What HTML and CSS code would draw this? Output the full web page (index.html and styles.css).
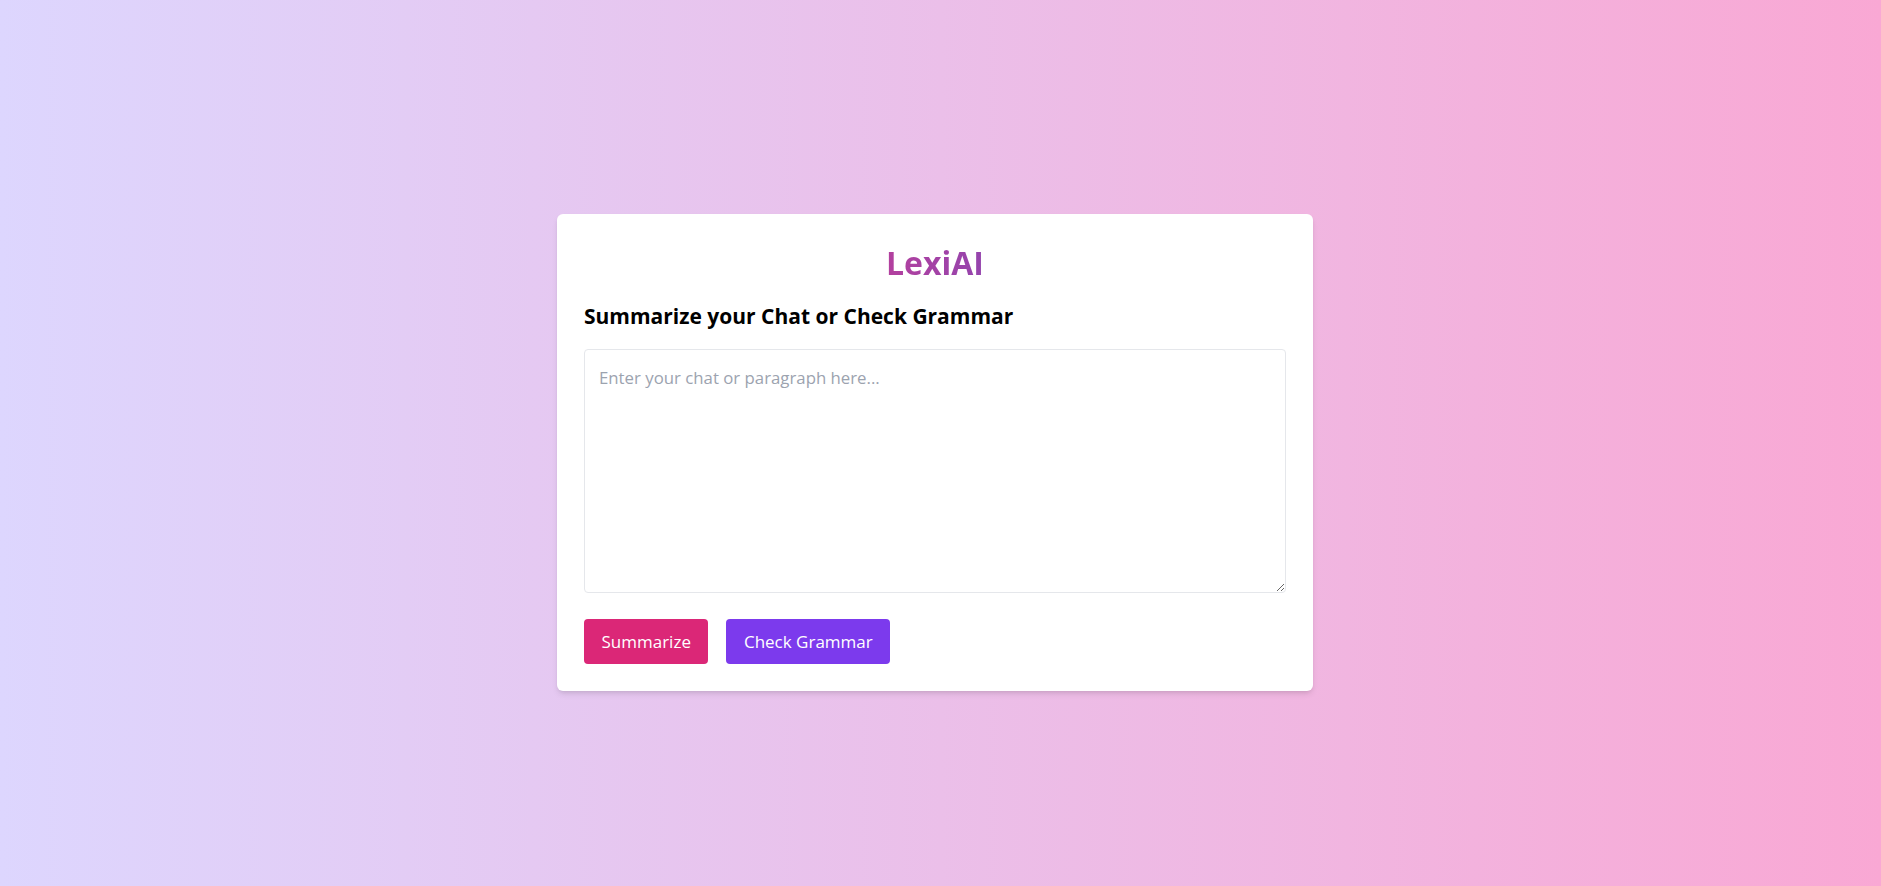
FILE: index.html
```html
<!DOCTYPE html>
<html lang="en">
<head>
<meta charset="utf-8">
<title>LexiAI</title>
<link rel="stylesheet" href="styles.css">
</head>
<body>
<main class="page">
  <section class="card">
    <h1 class="title">LexiAI</h1>
    <h2 class="subtitle">Summarize your Chat or Check Grammar</h2>
    <textarea class="input" placeholder="Enter your chat or paragraph here..."></textarea>
    <div class="actions">
      <button class="btn btn-pink">Summarize</button>
      <button class="btn btn-violet">Check Grammar</button>
    </div>
  </section>
</main>
</body>
</html>
```
FILE: styles.css
```css
* { box-sizing: border-box; }
html, body { margin: 0; padding: 0; }
body {
  font-family: "Open Sans", "Noto Sans", sans-serif;
  background: linear-gradient(to right, #ddd6fe, #f9a8d4);
  min-height: 100vh;
}
.page {
  min-height: 100vh;
  display: flex;
  align-items: center;
  justify-content: center;
  padding: 18px 11px 0 0;
}
.card {
  width: 756px;
  background: #fff;
  border-radius: 6px;
  box-shadow: 0 4px 6px -1px rgba(0,0,0,0.1), 0 2px 4px -2px rgba(0,0,0,0.1);
  padding: 29px 27px 27px;
  display: flex;
  flex-direction: column;
}
.title {
  margin: 0;
  text-align: center;
  font-size: 32px;
  line-height: 40px;
  font-weight: 700;
  background: linear-gradient(to right, #b3409e, #9444ad);
  -webkit-background-clip: text;
  background-clip: text;
  color: transparent;
  align-self: center;
}
.subtitle {
  margin: 19px 0 0;
  font-size: 21px;
  line-height: 28px;
  font-weight: 700;
  color: #000;
}
.input {
  margin-top: 19px;
  width: 100%;
  height: 244px;
  border: 1px solid #e5e7eb;
  border-radius: 4px;
  padding: 15px 14px;
  font-family: inherit;
  font-size: 16.8px;
  line-height: 25px;
  resize: vertical;
  color: #111827;
  outline: none;
  display: block;
}
.input::placeholder { color: #9ca3af; }
.actions {
  margin-top: 26px;
  display: flex;
  gap: 18px;
}
.btn {
  border: none;
  border-radius: 4px;
  color: #fff;
  font-family: inherit;
  font-size: 17px;
  line-height: 25px;
  padding: 10px 17.5px;
  cursor: pointer;
}
.btn-pink { background: #db2777; }
.btn-violet { background: #7c3aed; }
```
